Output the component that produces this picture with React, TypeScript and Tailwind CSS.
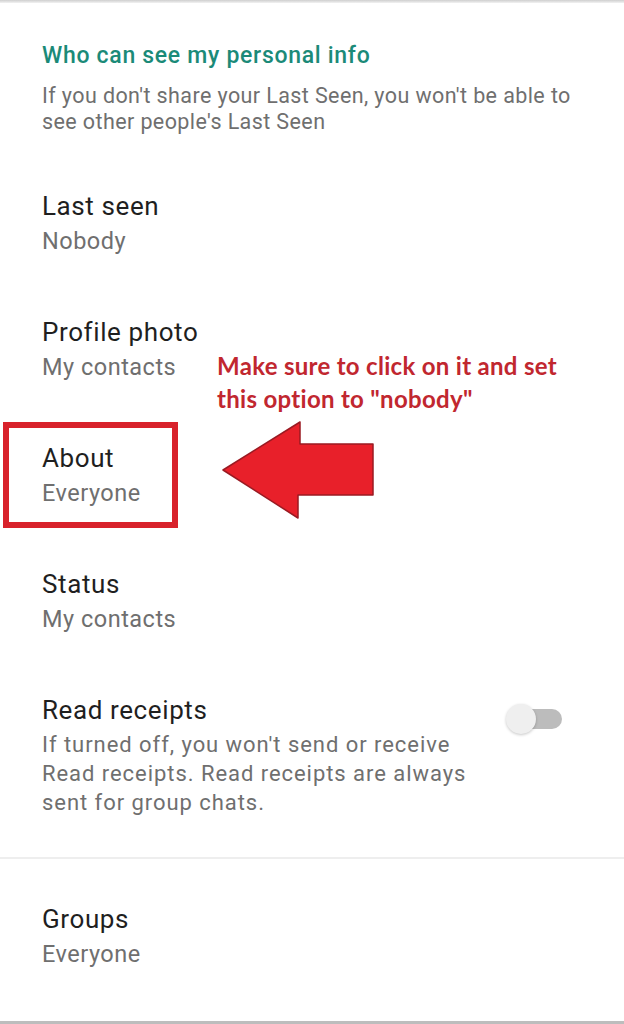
import React from "react";

type Row = { title: string; value: string };

const rows: Row[] = [
  { title: "Last seen", value: "Nobody" },
  { title: "Profile photo", value: "My contacts" },
  { title: "About", value: "Everyone" },
  { title: "Status", value: "My contacts" },
];

function SettingRow({ title, value }: Row) {
  return (
    <div className="h-[126px] pl-[42px] pt-[19px]">
      <div className="text-[26px] leading-[32px] tracking-[0.6px] text-[#1f1f1f]">{title}</div>
      <div className="mt-[2px] text-[23.5px] leading-[34px] tracking-[0.5px] text-[#6f6f6f]">{value}</div>
    </div>
  );
}

function Toggle() {
  return (
    <div className="relative w-[58px] h-[30px]">
      <div className="absolute left-[12px] top-[5px] w-[44px] h-[20px] rounded-full bg-[#bcbcbc]" />
      <div className="absolute left-0 top-0 w-[30px] h-[30px] rounded-full bg-[#efefef] shadow-[0_1px_3px_rgba(0,0,0,0.22)]" />
    </div>
  );
}

function Arrow() {
  return (
    <svg width="160" height="104" viewBox="0 0 160 104" className="absolute left-[220px] top-[419px]">
      <polygon
        points="3,51 80,3 80,25 153,25 153,76 78,76 78,99"
        fill="#e8202a"
        stroke="#9a1a22"
        strokeWidth="1.5"
        strokeLinejoin="round"
      />
    </svg>
  );
}

export default function App() {
  return (
    <div className="relative w-[624px] h-[1024px] bg-white overflow-hidden font-['Roboto',sans-serif]">
      <div className="h-[3px] bg-gradient-to-b from-[#cfcfcf] to-[#f2f2f2]" />

      <div className="pl-[42px] pt-[38px]">
        <div className="text-[23px] leading-[30px] font-medium tracking-[0.7px] text-[#1b8a78]">
          Who can see my personal info
        </div>
        <div className="mt-[12px] text-[21.5px] leading-[26px] tracking-[0.4px] text-[#6f6f6f]">
          <div>If you don't share your Last Seen, you won't be able to</div>
          <div>see other people's Last Seen</div>
        </div>
      </div>

      <div className="mt-[36px]">
        {rows.map((r) => (
          <SettingRow key={r.title} {...r} />
        ))}

        <div className="flex pl-[42px] pr-[60px] pt-[19px] h-[182px]">
          <div className="flex-1">
            <div className="text-[26px] leading-[32px] tracking-[0.6px] text-[#1f1f1f]">Read receipts</div>
            <div className="mt-[4px] text-[22px] leading-[29px] tracking-[0.95px] text-[#6f6f6f]">
              <div>If turned off, you won't send or receive</div>
              <div>Read receipts. Read receipts are always</div>
              <div>sent for group chats.</div>
            </div>
          </div>
          <div className="pt-[10px]">
            <Toggle />
          </div>
        </div>

        <div className="h-[2px] bg-[#eeeeee]" />

        <div className="pl-[42px] pt-[44px]">
          <div className="text-[26px] leading-[32px] tracking-[0.6px] text-[#1f1f1f]">Groups</div>
          <div className="mt-[2px] text-[23.5px] leading-[34px] tracking-[0.5px] text-[#6f6f6f]">Everyone</div>
        </div>
      </div>

      <div className="absolute left-0 right-0 bottom-0 h-[3px] bg-[#bdbdbd]" />

      {/* highlight around the About row */}
      <div className="absolute left-[3px] top-[422px] w-[175px] h-[106px] border-[6px] border-[#d8222b]" />

      {/* callout */}
      <div className="absolute left-[217px] top-[349px] text-[24px] leading-[33px] tracking-[0.3px] font-bold text-[#c1272f] font-['Lato',sans-serif]">
        <div>Make sure to click on it and set</div>
        <div>this option to "nobody"</div>
      </div>

      <Arrow />
    </div>
  );
}
